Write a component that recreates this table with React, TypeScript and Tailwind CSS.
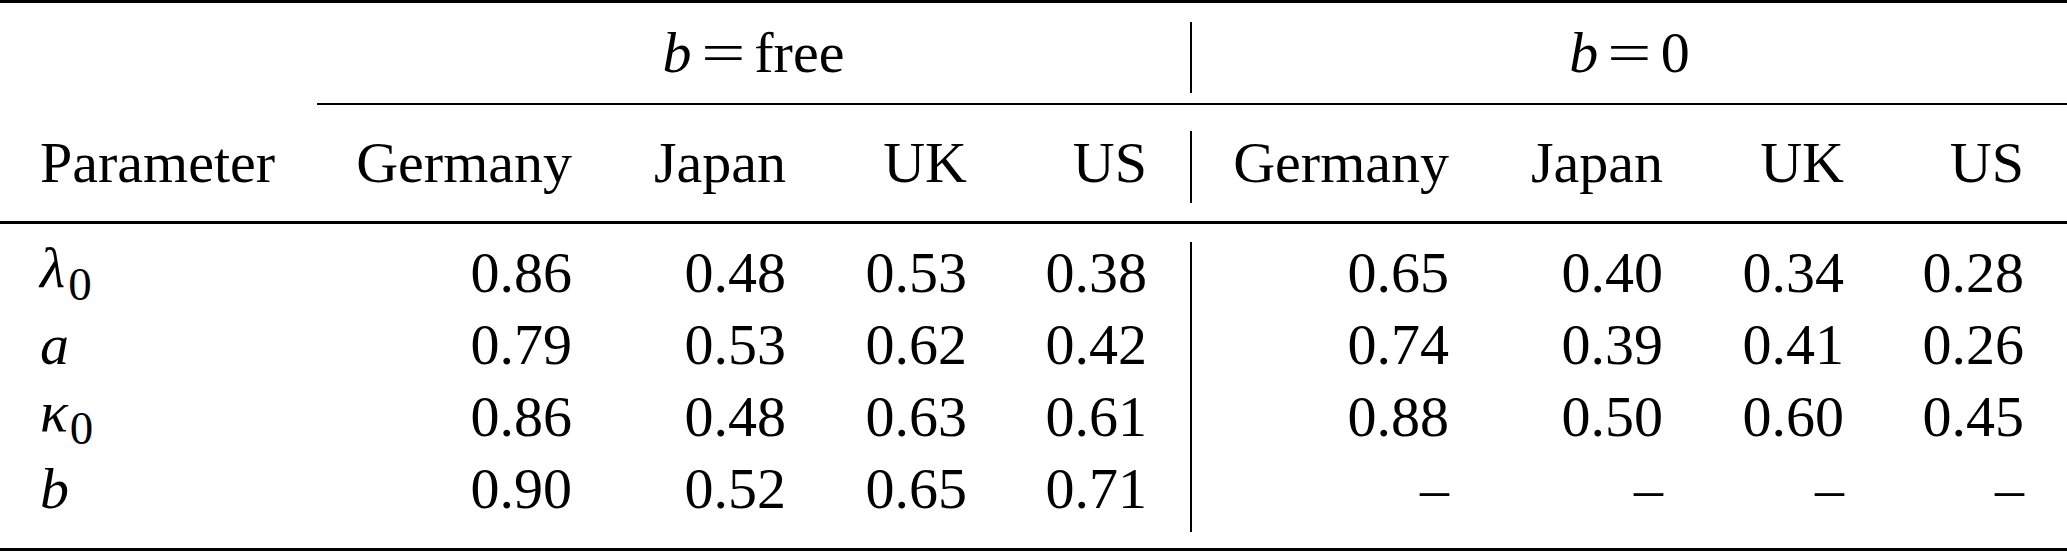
import type { ReactNode } from "react";

const cellFont = "[font-family:Liberation_Serif] font-['Liberation_Serif']";

const leftCells = [
  "w-[295px] pr-[40px] text-right",
  "w-[214px] pr-[40px] text-right",
  "w-[181px] pr-[40px] text-right",
  "w-[183px] pr-[43px] text-right",
];
const rightCells = [
  "w-[297px] pr-[40px] text-right",
  "w-[214px] pr-[40px] text-right",
  "w-[181px] pr-[40px] text-right",
  "flex-1 pr-[43px] text-right",
];

const countries = ["Germany", "Japan", "UK", "US"];

const rows: { label: ReactNode; free: string[]; zero: string[] }[] = [
  {
    label: (
      <>
        <i>λ</i>
        <span className="text-[47px] align-[-13px] ml-[3px]">0</span>
      </>
    ),
    free: ["0.86", "0.48", "0.53", "0.38"],
    zero: ["0.65", "0.40", "0.34", "0.28"],
  },
  {
    label: <i>a</i>,
    free: ["0.79", "0.53", "0.62", "0.42"],
    zero: ["0.74", "0.39", "0.41", "0.26"],
  },
  {
    label: (
      <>
        <i>κ</i>
        <span className="text-[47px] align-[-13px] ml-[2px]">0</span>
      </>
    ),
    free: ["0.86", "0.48", "0.63", "0.61"],
    zero: ["0.88", "0.50", "0.60", "0.45"],
  },
  {
    label: <i>b</i>,
    free: ["0.90", "0.52", "0.65", "0.71"],
    zero: ["–", "–", "–", "–"],
  },
];

function Eq({ rhs }: { rhs: string }) {
  return (
    <span className={`${cellFont} whitespace-nowrap`}>
      <i>b</i>
      <span className="inline-block mx-[15px] scale-x-[1.35]">=</span>
      {rhs}
    </span>
  );
}

export default function App() {
  return (
    <div className="[font-family:Liberation_Serif] font-['Liberation_Serif'] w-[2067px] h-[553px] bg-white text-black text-[58px] leading-none">
      <div className="h-[3px] bg-black" />

      <div className="flex h-[100px]">
        <div className="w-[317px]" />
        <div className="w-[873px] flex items-center justify-center">
          <Eq rhs="free" />
        </div>
        <div className="w-[2px]">
          <div className="mt-[19px] h-[71px] bg-black" />
        </div>
        <div className="flex-1 flex items-center justify-center">
          <Eq rhs="0" />
        </div>
      </div>

      <div className="flex">
        <div className="w-[317px]" />
        <div className="flex-1 h-[2px] bg-black" />
      </div>

      <div className="flex h-[116px]">
        <div className="w-[1190px] flex items-center">
          <div className={`${cellFont} w-[317px] pl-[40px]`}>Parameter</div>
          {countries.map((c, i) => (
            <div key={c} className={`${cellFont} ${leftCells[i]}`}>
              {c}
            </div>
          ))}
        </div>
        <div className="w-[2px]">
          <div className="mt-[26px] h-[72px] bg-black" />
        </div>
        <div className="flex-1 flex items-center">
          {countries.map((c, i) => (
            <div key={c} className={`${cellFont} ${rightCells[i]}`}>
              {c}
            </div>
          ))}
        </div>
      </div>

      <div className="h-[3px] bg-black" />

      <div className="flex h-[324px]">
        <div className="w-[1190px] pt-[13px]">
          {rows.map((r, ri) => (
            <div key={ri} className="flex h-[72px] items-center">
              <div className={`${cellFont} w-[317px] pl-[40px]`}>{r.label}</div>
              {r.free.map((v, i) => (
                <div key={i} className={`${cellFont} ${leftCells[i]}`}>
                  {v}
                </div>
              ))}
            </div>
          ))}
        </div>
        <div className="w-[2px]">
          <div className="mt-[18px] h-[290px] bg-black" />
        </div>
        <div className="flex-1 pt-[13px]">
          {rows.map((r, ri) => (
            <div key={ri} className="flex h-[72px] items-center">
              {r.zero.map((v, i) => (
                <div key={i} className={`${cellFont} ${rightCells[i]}`}>
                  {v}
                </div>
              ))}
            </div>
          ))}
        </div>
      </div>

      <div className="h-[3px] bg-black" />
    </div>
  );
}
